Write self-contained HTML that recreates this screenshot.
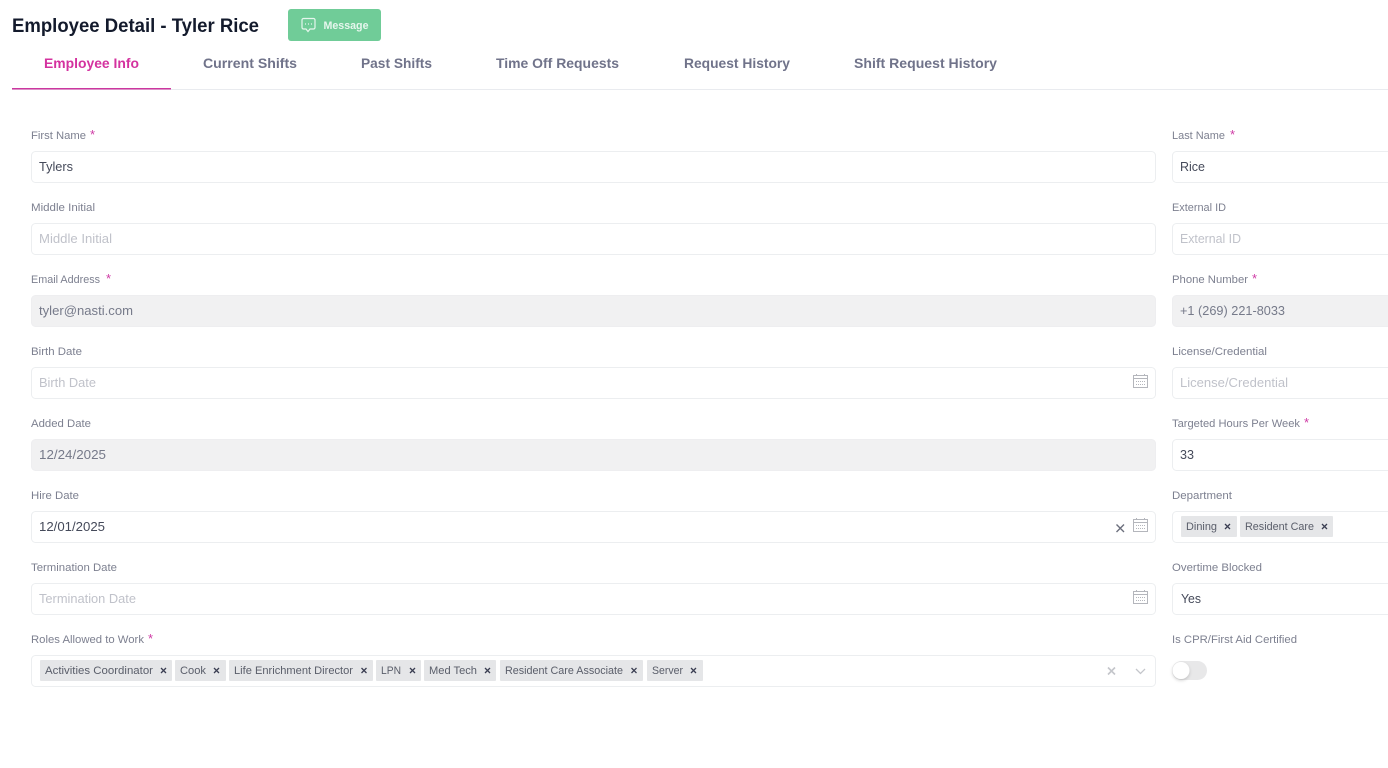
<!DOCTYPE html>
<html lang="en">
<head>
<meta charset="utf-8">
<title>Employee Detail - Tyler Rice</title>
<style>
html,body{margin:0;padding:0;background:#fff;width:1388px;height:768px;overflow:hidden}
svg{display:block;font-family:"Liberation Sans",sans-serif}
.title{font-size:19px;font-weight:700;fill:#131a2c}
.tab{font-size:14px;font-weight:700;fill:#70738a}
.lab{font-size:11px;fill:#7d8090}
.req{font-size:13px;fill:#cf3aa5}
.val{font-size:13px;fill:#454a5a}
.ph{font-size:13px;fill:#c0c2ca}
.dis{font-size:13px;fill:#767a8a}
.tagt{font-size:11px;fill:#5a5e6a}
.box{fill:#fff;stroke:#eceef0;stroke-width:1}
.dbox{fill:#f1f1f2;stroke:#eeeef0;stroke-width:1}
.tag{fill:#e5e6e8}
.x{stroke:#3a3e52;stroke-width:1.300;fill:none}
.cal{fill:none;stroke:#b4b6bc;stroke-width:1}
</style>
</head>
<body>
<svg width="1388" height="768" viewBox="0 0 1388 768" xmlns="http://www.w3.org/2000/svg">
<defs>
<g id="cal" class="cal">
<rect x="0.5" y="1.5" width="14" height="12"/>
<path d="M0.5 4.5H14.5M3.5 0V2M11.5 0V2"/>
<path d="M3 7.500H12M3 10.500H12" stroke-dasharray="1 1"/>
</g>
<path id="tx" d="M-2.500 -2.500L2.500 2.500M2.500 -2.500L-2.500 2.500" class="x"/>
<filter id="ks" x="-50%" y="-50%" width="200%" height="220%"><feDropShadow dx="0" dy="1.500" stdDeviation="1.500" flood-color="#000" flood-opacity=".18"/></filter>
</defs>

<text class="title" x="12" y="32" textLength="247" lengthAdjust="spacingAndGlyphs">Employee Detail - Tyler Rice</text>
<rect x="288" y="9" width="93" height="32" rx="3" fill="#70cc98"/>
<path d="M303.500 18.500h10a1.500 1.500 0 0 1 1.500 1.500v7.500a1.500 1.500 0 0 1-1.500 1.500h-3.500l-2 2.500l-2-2.500h-2.500a1.500 1.500 0 0 1-1.500-1.500v-7.500a1.500 1.500 0 0 1 1.500-1.500z" fill="none" stroke="#e6f6ed" stroke-width="1.200"/>
<path d="M305 24h1M308 24h1M311 24h1" stroke="#e6f6ed" stroke-width="1.200"/>
<text x="323.500" y="29" font-size="11" font-weight="700" fill="#e6f6ed" textLength="45" lengthAdjust="spacingAndGlyphs">Message</text>

<text class="tab" x="44" y="68" style="fill:#d4329f" textLength="95" lengthAdjust="spacingAndGlyphs">Employee Info</text>
<text class="tab" x="203" y="68" textLength="94" lengthAdjust="spacingAndGlyphs">Current Shifts</text>
<text class="tab" x="361" y="68" textLength="71" lengthAdjust="spacingAndGlyphs">Past Shifts</text>
<text class="tab" x="496" y="68" textLength="123" lengthAdjust="spacingAndGlyphs">Time Off Requests</text>
<text class="tab" x="684" y="68" textLength="106" lengthAdjust="spacingAndGlyphs">Request History</text>
<text class="tab" x="854" y="68" textLength="143" lengthAdjust="spacingAndGlyphs">Shift Request History</text>
<rect x="12" y="89" width="1376" height="1" fill="#e9ebef"/>
<rect x="12" y="88" width="159" height="1.500" fill="#cc379f"/>

<!-- left column -->
<text class="lab" x="31" y="139" textLength="55" lengthAdjust="spacingAndGlyphs">First Name</text><text class="req" x="90" y="139">*</text>
<rect class="box" x="31.500" y="151.500" width="1124" height="31" rx="4"/>
<text class="val" x="39" y="171" textLength="34" lengthAdjust="spacingAndGlyphs">Tylers</text>

<text class="lab" x="31" y="211" textLength="64" lengthAdjust="spacingAndGlyphs">Middle Initial</text>
<rect class="box" x="31.500" y="223.500" width="1124" height="31" rx="4"/>
<text class="ph" x="39" y="243" textLength="73" lengthAdjust="spacingAndGlyphs">Middle Initial</text>

<text class="lab" x="31" y="283" textLength="69" lengthAdjust="spacingAndGlyphs">Email Address</text><text class="req" x="106" y="283">*</text>
<rect class="dbox" x="31.500" y="295.500" width="1124" height="31" rx="4"/>
<text class="dis" x="39" y="315" textLength="94" lengthAdjust="spacingAndGlyphs">tyler@nasti.com</text>

<text class="lab" x="31" y="355" textLength="51" lengthAdjust="spacingAndGlyphs">Birth Date</text>
<rect class="box" x="31.500" y="367.500" width="1124" height="31" rx="4"/>
<text class="ph" x="39" y="387" textLength="57" lengthAdjust="spacingAndGlyphs">Birth Date</text>
<use href="#cal" x="1133" y="374"/>

<text class="lab" x="31" y="427" textLength="60" lengthAdjust="spacingAndGlyphs">Added Date</text>
<rect class="dbox" x="31.500" y="439.500" width="1124" height="31" rx="4"/>
<text class="dis" x="39" y="459" textLength="67" lengthAdjust="spacingAndGlyphs">12/24/2025</text>

<text class="lab" x="31" y="499" textLength="48" lengthAdjust="spacingAndGlyphs">Hire Date</text>
<rect class="box" x="31.500" y="511.500" width="1124" height="31" rx="4"/>
<text class="val" x="39" y="531" textLength="66" lengthAdjust="spacingAndGlyphs">12/01/2025</text>
<path d="M1116.500 524.500L1124 532M1124 524.500L1116.500 532" stroke="#6b6e7c" stroke-width="1.400" fill="none"/>
<use href="#cal" x="1133" y="518"/>

<text class="lab" x="31" y="571" textLength="86" lengthAdjust="spacingAndGlyphs">Termination Date</text>
<rect class="box" x="31.500" y="583.500" width="1124" height="31" rx="4"/>
<text class="ph" x="39" y="603" textLength="97" lengthAdjust="spacingAndGlyphs">Termination Date</text>
<use href="#cal" x="1133" y="590"/>

<text class="lab" x="31" y="643" textLength="113" lengthAdjust="spacingAndGlyphs">Roles Allowed to Work</text><text class="req" x="148" y="643">*</text>
<rect class="box" x="31.500" y="655.500" width="1124" height="31" rx="4"/>
<rect class="tag" x="40" y="660" width="132" height="21" rx="1"/>
<text class="tagt" x="45" y="674" textLength="108" lengthAdjust="spacingAndGlyphs">Activities Coordinator</text><use href="#tx" x="163.500" y="670.500"/>
<rect class="tag" x="175" y="660" width="51" height="21" rx="1"/>
<text class="tagt" x="180" y="674" textLength="26" lengthAdjust="spacingAndGlyphs">Cook</text><use href="#tx" x="216.500" y="670.500"/>
<rect class="tag" x="229" y="660" width="144" height="21" rx="1"/>
<text class="tagt" x="234" y="674" textLength="119" lengthAdjust="spacingAndGlyphs">Life Enrichment Director</text><use href="#tx" x="364" y="670.500"/>
<rect class="tag" x="376" y="660" width="45" height="21" rx="1"/>
<text class="tagt" x="381" y="674" textLength="20" lengthAdjust="spacingAndGlyphs">LPN</text><use href="#tx" x="412.500" y="670.500"/>
<rect class="tag" x="424" y="660" width="72" height="21" rx="1"/>
<text class="tagt" x="429" y="674" textLength="48" lengthAdjust="spacingAndGlyphs">Med Tech</text><use href="#tx" x="487.500" y="670.500"/>
<rect class="tag" x="500" y="660" width="143" height="21" rx="1"/>
<text class="tagt" x="505" y="674" textLength="118" lengthAdjust="spacingAndGlyphs">Resident Care Associate</text><use href="#tx" x="634" y="670.500"/>
<rect class="tag" x="647" y="660" width="56" height="21" rx="1"/>
<text class="tagt" x="652" y="674" textLength="31" lengthAdjust="spacingAndGlyphs">Server</text><use href="#tx" x="693.500" y="670.500"/>
<path d="M1108 667.500L1115 674.500M1115 667.500L1108 674.500" stroke="#c4c6cb" stroke-width="1.600" fill="none"/>
<path d="M1136 669L1140.500 673.500L1145 669" stroke="#c4c6cb" stroke-width="1.300" fill="none"/>

<!-- right column -->
<text class="lab" x="1172" y="139" textLength="53" lengthAdjust="spacingAndGlyphs">Last Name</text><text class="req" x="1230" y="139">*</text>
<rect class="box" x="1172.500" y="151.500" width="1124" height="31" rx="4"/>
<text class="val" x="1180" y="171" textLength="25" lengthAdjust="spacingAndGlyphs">Rice</text>

<text class="lab" x="1172" y="211" textLength="54" lengthAdjust="spacingAndGlyphs">External ID</text>
<rect class="box" x="1172.500" y="223.500" width="1124" height="31" rx="4"/>
<text class="ph" x="1180" y="243" textLength="61" lengthAdjust="spacingAndGlyphs">External ID</text>

<text class="lab" x="1172" y="283" textLength="76" lengthAdjust="spacingAndGlyphs">Phone Number</text><text class="req" x="1252" y="283">*</text>
<rect class="dbox" x="1172.500" y="295.500" width="1124" height="31" rx="4"/>
<text class="dis" x="1180" y="315" textLength="105" lengthAdjust="spacingAndGlyphs">+1 (269) 221-8033</text>

<text class="lab" x="1172" y="355" textLength="95" lengthAdjust="spacingAndGlyphs">License/Credential</text>
<rect class="box" x="1172.500" y="367.500" width="1124" height="31" rx="4"/>
<text class="ph" x="1180" y="387" textLength="108" lengthAdjust="spacingAndGlyphs">License/Credential</text>

<text class="lab" x="1172" y="427" textLength="128" lengthAdjust="spacingAndGlyphs">Targeted Hours Per Week</text><text class="req" x="1304" y="427">*</text>
<rect class="box" x="1172.500" y="439.500" width="1124" height="31" rx="4"/>
<text class="val" x="1180" y="459" textLength="14" lengthAdjust="spacingAndGlyphs">33</text>

<text class="lab" x="1172" y="499" textLength="60" lengthAdjust="spacingAndGlyphs">Department</text>
<rect class="box" x="1172.500" y="511.500" width="1124" height="31" rx="4"/>
<rect class="tag" x="1181" y="516" width="56" height="21" rx="1"/>
<text class="tagt" x="1186" y="530" textLength="31" lengthAdjust="spacingAndGlyphs">Dining</text><use href="#tx" x="1227.500" y="526.500"/>
<rect class="tag" x="1240" y="516" width="93" height="21" rx="1"/>
<text class="tagt" x="1245" y="530" textLength="69" lengthAdjust="spacingAndGlyphs">Resident Care</text><use href="#tx" x="1324.500" y="526.500"/>

<text class="lab" x="1172" y="571" textLength="90" lengthAdjust="spacingAndGlyphs">Overtime Blocked</text>
<rect class="box" x="1172.500" y="583.500" width="1124" height="31" rx="4"/>
<text class="val" x="1181" y="603" textLength="20" lengthAdjust="spacingAndGlyphs">Yes</text>

<text class="lab" x="1172" y="643" textLength="125" lengthAdjust="spacingAndGlyphs">Is CPR/First Aid Certified</text>
<rect x="1172" y="661" width="35" height="19" rx="9.500" fill="#e8e8e9"/>
<circle cx="1181" cy="670.500" r="8.500" fill="#fff" filter="url(#ks)"/>
</svg>
</body>
</html>
